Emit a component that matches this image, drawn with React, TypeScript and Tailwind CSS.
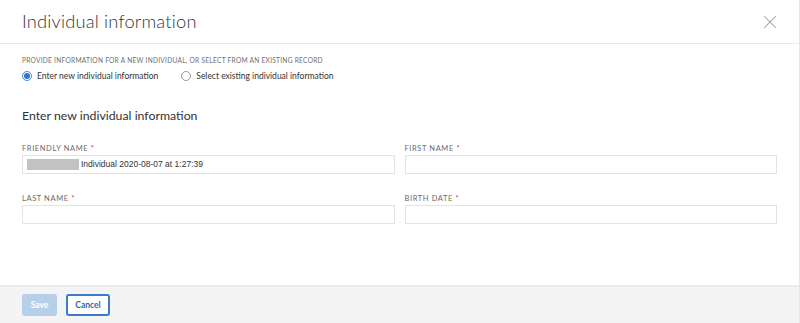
import { X } from 'lucide-react';

const Label = ({ text }: { text: string }) => (
  <div className="h-[9px] text-[7.5px] tracking-[0.08em] uppercase text-[#6b6b6b] leading-[9px] mb-[2px]">
    {text} <span className="text-[#e0334c]">*</span>
  </div>
);

const Field = ({ label, children }: { label: string; children?: React.ReactNode }) => (
  <div className="flex flex-col">
    <Label text={label} />
    <div className="h-[19px] border border-[#e3e3e3] bg-white flex items-center pl-[4px] text-[8.5px] text-[#333] font-['Liberation_Sans',sans-serif]">
      {children}
    </div>
  </div>
);

export default function App() {
  return (
    <div className="w-[800px] h-[323px] bg-white font-['Lato',sans-serif] flex flex-col border-r border-[#e6e6e6] overflow-hidden">
      {/* Header */}
      <div className="h-[44px] border-b border-[#e8e8e8] flex items-center justify-between pl-[22px] pr-[18px] shrink-0">
        <h1 className="text-[18.3px] font-light text-[#333] tracking-[0.01em] leading-none mt-[-1px]">Individual information</h1>
        <X className="w-[22px] h-[22px] text-[#9a9a9a]" strokeWidth={1.1} />
      </div>

      {/* Body */}
      <div className="flex-1 px-[22px] pt-[13px]">
        <div className="text-[6.6px] tracking-[0.04em] uppercase text-[#707070] leading-none">
          Provide information for a new individual, or select from an existing record
        </div>
        <div className="flex items-center gap-[23px] mt-[6px] text-[8.5px] text-[#333]">
          <label className="flex items-center gap-[5px]">
            <span className="w-[10px] h-[10px] rounded-full border border-[#4a86d8] flex items-center justify-center">
              <span className="w-[6px] h-[6px] rounded-full bg-[#2f74d0]" />
            </span>
            Enter new individual information
          </label>
          <label className="flex items-center gap-[5px]">
            <span className="w-[10px] h-[10px] rounded-full border border-[#9a9a9a] bg-white" />
            Select existing individual information
          </label>
        </div>

        <h2 className="text-[12.3px] text-[#333] leading-none mt-[28px]">Enter new individual information</h2>

        <div className="grid grid-cols-2 gap-x-[10px] gap-y-[20px] mt-[21px]">
          <Field label="Friendly name">
            <span className="w-[52px] h-[11px] bg-[#c2c2c2] mr-[2px]" />
            Individual 2020-08-07 at 1:27:39
          </Field>
          <Field label="First name" />
          <Field label="Last name" />
          <Field label="Birth date" />
        </div>
      </div>

      {/* Footer */}
      <div className="h-[38px] bg-[#f4f4f4] border-t-2 border-[#ececec] flex items-center gap-[9px] px-[22px] shrink-0">
        <button className="w-[35px] h-[22px] rounded-[3px] bg-[#b6d0ea] text-white text-[8.5px] font-bold">Save</button>
        <button className="w-[44px] h-[22px] rounded-[3px] border-2 border-[#3d7cc9] bg-white text-[#34679f] text-[8.5px] font-bold">Cancel</button>
      </div>
    </div>
  );
}
